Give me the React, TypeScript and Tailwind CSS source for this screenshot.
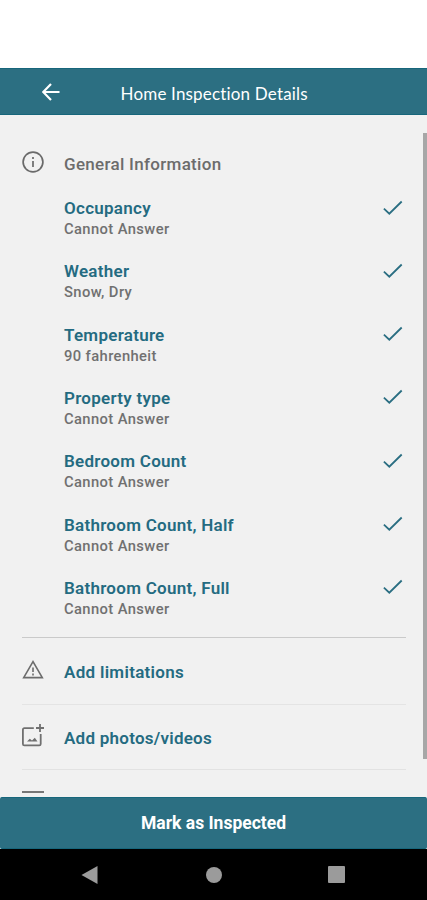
const details = [
  { label: "Occupancy", value: "Cannot Answer" },
  { label: "Weather", value: "Snow, Dry" },
  { label: "Temperature", value: "90 fahrenheit" },
  { label: "Property type", value: "Cannot Answer" },
  { label: "Bedroom Count", value: "Cannot Answer" },
  { label: "Bathroom Count, Half", value: "Cannot Answer" },
  { label: "Bathroom Count, Full", value: "Cannot Answer" },
];

function BackIcon() {
  return (
    <svg className="h-[18px] w-[18px]" viewBox="0 0 18 18" fill="none" stroke="#fff" strokeWidth="2.2">
      <path d="M17.5 9H1.6M9 1 1.2 9 9 17" />
    </svg>
  );
}

function InfoIcon() {
  return (
    <svg className="h-[22px] w-[22px]" viewBox="0 0 22 22" fill="none" stroke="#6a6a6a" strokeWidth="1.7">
      <circle cx="11" cy="11" r="9.9" />
      <path d="M11 10v6M11 6v2.1" />
    </svg>
  );
}

function CheckIcon() {
  return (
    <svg className="h-[16px] w-[20px]" viewBox="0 0 20 16" fill="none" stroke="#2a6e82" strokeWidth="1.8">
      <path d="M.9 8.6 6.3 13.7 18.7 1.5" />
    </svg>
  );
}

function WarningIcon() {
  return (
    <svg className="h-[20px] w-[22px]" viewBox="0 0 22 20" fill="none" stroke="#6c6c6c" strokeWidth="1.6">
      <path d="M11 1.6 1.7 17.6h18.6Z" />
      <path d="M11 7.6v4.4M11 13.6v1.8" />
    </svg>
  );
}

function AddPhotoIcon() {
  return (
    <svg className="h-[23px] w-[22px]" viewBox="0 0 22 23" fill="none" stroke="#707070" strokeWidth="1.8">
      <path d="M11.8 4.2H2.4Q.9 4.2.9 5.7v14.2q0 1.5 1.5 1.5h14.8q1.5 0 1.5-1.5V10" />
      <path d="M18 0v8M14 4h8" />
      <path d="m5 17.6 2.8-2.8 2.2 1.8 2.8-2.8 2.7 3.8Z" fill="#707070" stroke="none" />
    </svg>
  );
}

export default function App() {
  return (
    <div className="flex h-[900px] w-[427px] flex-col overflow-hidden bg-white pt-[68px] font-['Roboto',sans-serif] whitespace-nowrap">
      <header className="flex h-[47px] shrink-0 items-center border-y border-[#17667b] bg-[#2c6f82] pl-[41.5px]">
        <BackIcon />
        <h1 className="ml-[61px] pt-[4px] font-['Lato',sans-serif] text-[17px] leading-5 tracking-[0.18px] text-white">
          Home Inspection Details
        </h1>
      </header>

      <main className="relative flex h-[682px] shrink-0 flex-col overflow-hidden bg-[#f1f1f1] pr-[21px] pl-[22px]">
        <div className="flex h-[83px] shrink-0 pt-[36px]">
          <InfoIcon />
          <h2 className="ml-[20px] pt-[3px] text-[17px] leading-5 font-medium tracking-[0.3px] text-[#6c6c6c]">
            General Information
          </h2>
        </div>
        <ul className="h-[439px] shrink-0 pl-[42px]">
          {details.map((item) => (
            <li key={item.label} className="flex h-[63.33px] items-start justify-between">
              <div>
                <p className="text-[17px] leading-[21px] font-semibold tracking-[0.27px] text-[#246b81]">
                  {item.label}
                </p>
                <p className="text-[14.75px] leading-5 font-medium tracking-[0.39px] text-[#707070]">
                  {item.value}
                </p>
              </div>
              <div className="mt-[1.5px] mr-[3px]">
                <CheckIcon />
              </div>
            </li>
          ))}
        </ul>
        <div className="flex h-[67px] shrink-0 border-t border-[#cacaca] pt-[22px]">
          <WarningIcon />
          <p className="ml-[20px] pt-[2px] text-[17px] leading-5 font-semibold tracking-[0.3px] text-[#246b81]">
            Add limitations
          </p>
        </div>
        <div className="flex h-[65px] shrink-0 border-t border-[#e4e4e4] pt-[19px]">
          <AddPhotoIcon />
          <p className="ml-[20px] pt-[4px] text-[17px] leading-5 font-semibold tracking-[0.25px] text-[#246b81]">
            Add photos/videos
          </p>
        </div>
        <div className="h-[28px] shrink-0 border-t border-[#e2e2e2] pt-[21px]">
          <div className="h-[2px] w-[22px] bg-[#777]" />
        </div>
        <div className="absolute top-[18px] right-0 h-[626px] w-[4px] bg-[#a7a7a7]" />
      </main>

      <button className="h-[52px] shrink-0 rounded-[2px] border-y border-[#17667b] bg-[#2c6f82] text-[17.5px] leading-5 font-bold text-white">
        Mark as Inspected
      </button>

      <nav className="flex h-[51px] shrink-0 items-center bg-black pl-[81px]">
        <svg className="h-[18px] w-[17px]" viewBox="0 0 17 18">
          <path d="M16.5 0v18L.5 9Z" fill="#9b9b9b" />
        </svg>
        <div className="ml-[108px] h-4 w-4 rounded-full bg-[#9b9b9b]" />
        <div className="ml-[106px] h-[17px] w-[17px] rounded-[1px] bg-[#9b9b9b]" />
      </nav>
    </div>
  );
}
